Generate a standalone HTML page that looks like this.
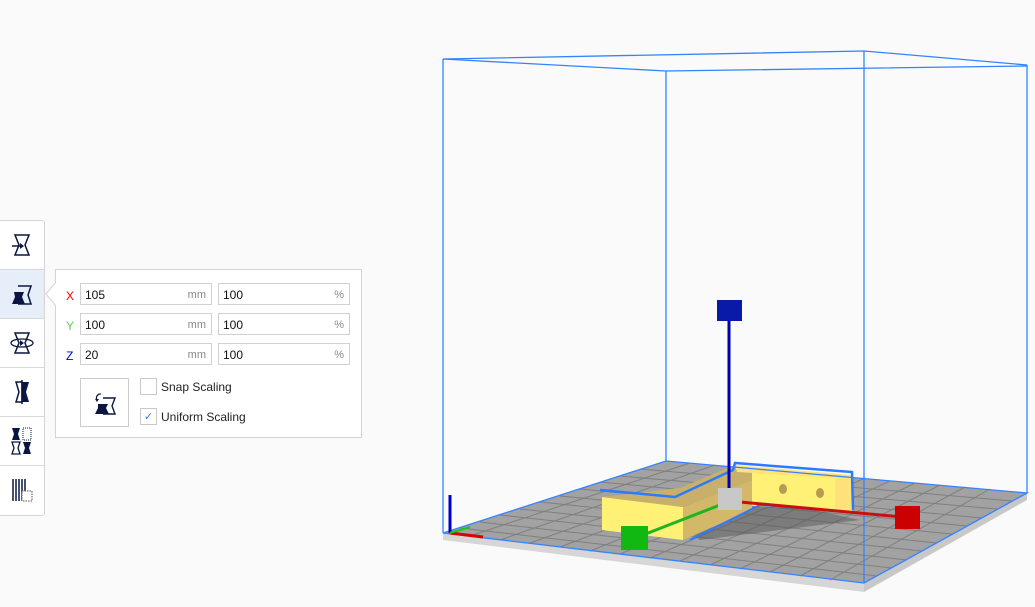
<!DOCTYPE html>
<html><head><meta charset="utf-8"><style>
body{margin:0;width:1035px;height:607px;background:#fafafa;font-family:"Liberation Sans",sans-serif;overflow:hidden;position:relative}
.tb{position:absolute;left:-1px;top:220px;width:44px;height:294px;background:#fff;border:1px solid #d4d4d4;border-radius:0 3px 3px 0}
.btn{height:48px;border-bottom:1px solid #d8d8d8;display:flex;align-items:center;justify-content:center}
.btn:last-child{border-bottom:none}
.sel{background:#e6eefa}
.pop{position:absolute;left:55px;top:269px;width:305px;height:167px;background:#fff;border:1px solid #d4d4d4}
.in{position:absolute;height:22px;border:1px solid #d0d0d0;background:#fff;font-size:12px;line-height:22px;padding-left:4px;box-sizing:border-box;color:#111}
.in span{position:absolute;right:5px;top:0;color:#888;font-size:11px}
.lb{position:absolute;font-size:12px}
.cb{position:absolute;width:17px;height:17px;border:1px solid #c8c8c8;box-sizing:border-box}
.ct{position:absolute;font-size:12px;color:#222}
</style></head><body>
<svg width="1035" height="607" style="position:absolute;left:0;top:0">
<polygon points="443,533 666,461 1027,493 864,583" fill="#a2a2a2"/>
<polygon points="443,533 864,583 864,592 443,540" fill="#d6d6d6"/>
<polygon points="864,583 1027,493 1027,500 864,592" fill="#c8c8c8"/>
<g stroke="#7c7c7c" stroke-width="1" opacity="0.9">
<line x1="460" y1="528" x2="877" y2="576"/><line x1="480" y1="522" x2="892" y2="568"/><line x1="500" y1="515" x2="907" y2="560"/><line x1="520" y1="509" x2="922" y2="551"/><line x1="540" y1="502" x2="937" y2="543"/><line x1="560" y1="496" x2="952" y2="534"/><line x1="580" y1="489" x2="967" y2="526"/><line x1="600" y1="482" x2="982" y2="518"/><line x1="620" y1="476" x2="997" y2="509"/><line x1="640" y1="469" x2="1012" y2="501"/>
<line x1="470" y1="536" x2="690" y2="463"/><line x1="500" y1="540" x2="715" y2="465"/><line x1="530" y1="543" x2="740" y2="468"/><line x1="560" y1="547" x2="765" y2="470"/><line x1="590" y1="551" x2="790" y2="472"/><line x1="620" y1="554" x2="815" y2="474"/><line x1="650" y1="558" x2="840" y2="476"/><line x1="680" y1="561" x2="865" y2="478"/><line x1="710" y1="565" x2="890" y2="481"/><line x1="740" y1="569" x2="915" y2="483"/><line x1="770" y1="572" x2="940" y2="485"/><line x1="800" y1="576" x2="965" y2="487"/><line x1="830" y1="580" x2="990" y2="489"/>
</g>
<polygon points="660,508 745,495 860,520 700,540" fill="#555" opacity="0.5"/>
<polygon points="602,497 602,530 683,540 683,507" fill="#fff176"/>
<polygon points="683,507 683,540 752,510 752,480" fill="#d2b868"/>
<polygon points="752,470 752,506 850,511 850,479" fill="#fff176"/>
<polygon points="602,497 683,507 752,480 752,470 730,467 680,488" fill="#c9b06a"/>
<polygon points="735,465 852,475 852,513 835,512 835,478 737,472" fill="#ffe27a"/>
<ellipse cx="783" cy="489" rx="4" ry="5" fill="#b89a50"/><ellipse cx="820" cy="493" rx="4" ry="5" fill="#b89a50"/>
<polyline points="600,490 675,497 733,470 735,463 852,472 853,510" fill="none" stroke="#2a7bff" stroke-width="2.5"/>
<polyline points="690,540 760,505 850,512" fill="none" stroke="#2a7bff" stroke-width="2"/>
<g stroke="#3383ff" stroke-width="1.3" fill="none">
<line x1="443" y1="59" x2="443" y2="533"/><line x1="666" y1="71" x2="666" y2="461"/><line x1="864" y1="51" x2="864" y2="583"/><line x1="1027" y1="65" x2="1027" y2="493"/>
<polyline points="443,59 864,51 1027,65"/><polyline points="443,59 666,71 1027,66"/>
<polygon points="443,533 666,461 1027,493 864,583"/>
</g>
<line x1="729" y1="318" x2="729" y2="498" stroke="#0000b0" stroke-width="3"/>
<rect x="717" y="300" width="25" height="21" fill="#0a1aa8"/>
<line x1="740" y1="502" x2="902" y2="517" stroke="#c81010" stroke-width="3"/>
<rect x="895" y="506" width="25" height="23" fill="#c00"/>
<line x1="720" y1="505" x2="643" y2="535" stroke="#1fb51f" stroke-width="3"/>
<rect x="621" y="526" width="27" height="24" fill="#12b812"/>
<rect x="718" y="488" width="24" height="22" fill="#c8c8c8"/>
<line x1="450" y1="495" x2="450" y2="533" stroke="#00c" stroke-width="3"/>
<line x1="450" y1="533" x2="483" y2="537" stroke="#d00" stroke-width="3"/>
<line x1="450" y1="533" x2="470" y2="527" stroke="#1c1" stroke-width="2"/>
</svg>
<div class="tb">
<div class="btn"><svg width="24" height="24"><path d="M5 2h14l-4 10 4 10H5l4-10z" fill="none" stroke="#0a1640" stroke-width="1.5"/><path d="M2 13h9" stroke="#0a1640" stroke-width="1.5"/><path d="M10 10l4 3-4 3z" fill="#0a1640"/></svg></div>
<div class="btn sel"><svg width="24" height="24"><path d="M8 4h13l-3 9 3 9H8" fill="none" stroke="#0a1640" stroke-width="1.5"/><path d="M4 10h10l-2 5 3 7H2l3-7z" fill="#0a1640"/></svg></div>
<div class="btn"><svg width="26" height="24"><path d="M6 2h14l-4 10 4 10H6l4-10z" fill="none" stroke="#0a1640" stroke-width="1.5"/><ellipse cx="13" cy="12" rx="11" ry="4" fill="none" stroke="#0a1640" stroke-width="1.3"/><path d="M11 9l4 3-4 3z" fill="#0a1640"/></svg></div>
<div class="btn"><svg width="24" height="26"><path d="M6 3h6v20H6l3-10z" fill="none" stroke="#0a1640" stroke-width="1.5"/><path d="M12 3h7l-3 10 3 10h-7z" fill="#0a1640"/><path d="M12 1v24" stroke="#0a1640" stroke-width="1.5"/></svg></div>
<div class="btn"><svg width="26" height="28"><path d="M3 1h8l-2 6 2 6H3l2-6z" fill="#0a1640"/><path d="M14 1h8v12h-8z" fill="none" stroke="#0a1640" stroke-dasharray="1 1"/><path d="M3 15h8l-2 6 2 6H3l2-6z" fill="none" stroke="#0a1640" stroke-width="1.3"/><path d="M14 15h8l-2 6 2 6h-8l2-6z" fill="#0a1640"/></svg></div>
<div class="btn"><svg width="26" height="26"><path d="M4 2v22M7 2v22M10 2v22M13 2v22M16 2v12" stroke="#0a1640" stroke-width="1.5"/><rect x="13" y="14" width="10" height="10" fill="#fff" stroke="#555" stroke-dasharray="1.5 1"/></svg></div>
</div>
<div class="pop">
<div class="lb" style="left:10px;top:19px;color:#e00">X</div>
<div class="lb" style="left:10px;top:49px;color:#5c5">Y</div>
<div class="lb" style="left:10px;top:79px;color:#00c">Z</div>
<div class="in" style="left:24px;top:13px;width:132px">105<span>mm</span></div>
<div class="in" style="left:162px;top:13px;width:132px">100<span>%</span></div>
<div class="in" style="left:24px;top:43px;width:132px">100<span>mm</span></div>
<div class="in" style="left:162px;top:43px;width:132px">100<span>%</span></div>
<div class="in" style="left:24px;top:73px;width:132px">20<span>mm</span></div>
<div class="in" style="left:162px;top:73px;width:132px">100<span>%</span></div>
<div style="position:absolute;left:24px;top:108px;width:47px;height:47px;border:1px solid #ccc;display:flex;align-items:center;justify-content:center"><svg width="26" height="26"><path d="M11 8h12l-3 8 3 8H11" fill="none" stroke="#0a1640" stroke-width="1.4"/><path d="M6 14h10l-2 4 3 6H3l3-6z" fill="#0a1640"/><path d="M9 4a4 4 0 0 0-4 6" fill="none" stroke="#0a1640" stroke-width="1.2"/><path d="M3 9l2 3 2-3z" fill="#0a1640"/></svg></div>
<div class="cb" style="left:84px;top:108px"></div>
<div class="ct" style="left:105px;top:110px">Snap Scaling</div>
<div class="cb" style="left:84px;top:138px;color:#3a7be0;font-size:11px;text-align:center;line-height:16px">✓</div>
<div class="ct" style="left:105px;top:140px">Uniform Scaling</div>
</div>
<svg width="12" height="24" style="position:absolute;left:45px;top:282px"><path d="M11 0L1 12 11 24" fill="#fff" stroke="#d4d4d4"/><rect x="11" y="0" width="2" height="24" fill="#fff"/></svg>
</body></html>
